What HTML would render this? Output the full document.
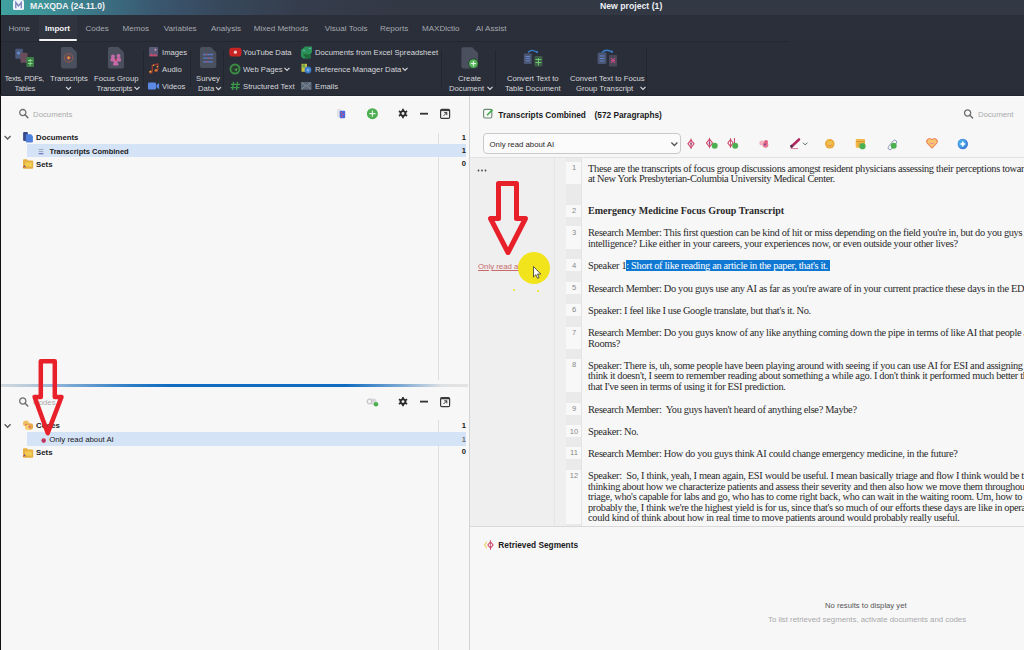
<!DOCTYPE html>
<html><head><meta charset="utf-8">
<style>
*{margin:0;padding:0;box-sizing:border-box}
html,body{width:1024px;height:650px;overflow:hidden;background:#f7f7f8;font-family:"Liberation Sans",sans-serif}
.a{position:absolute}
.t{position:absolute;white-space:pre;line-height:12px;height:12px}
#title{left:0;top:0;width:1024px;height:15px;background:linear-gradient(90deg,#40a2a0 0px,#3e9a9a 30px,#3c8590 70px,#3b6c80 110px,#3a566e 160px,#37485c 220px,#353d4c 300px,#333845 400px,#333845 1024px)}
#tabs{left:0;top:15px;width:1024px;height:26.5px;background:#2b2f3a}
#ribbon{left:0;top:41px;width:1024px;height:55px;background:#2a2e39}
.tab{color:#a6a9b0;font-size:8.05px;top:22.6px}
.rt{color:#d6d8dc;font-size:7.7px}
.lb{position:absolute;left:0;top:0;width:1px;height:96px;background:#0c0c0c}
.sep{position:absolute;width:1px;background:#22262e}
.ph{color:#ababab;font-size:7.8px}
.b{font-weight:bold}
.cnt{font-size:7.6px;font-weight:bold;color:#222;text-align:right;width:20px}
.doc{font-family:"Liberation Serif",serif;font-size:10.4px;letter-spacing:-0.33px;color:#2a2a2a;line-height:10.5px;white-space:pre;position:absolute;left:588px}
.doc.b{letter-spacing:0;font-size:10px}
.hl{background:#0f78d2;color:#fff;padding-right:2px}
.pn{position:absolute;left:566px;width:15px;background:#f8f8f9}
.pnum{position:absolute;left:566px;width:16px;text-align:center;font-size:7.6px;color:#888;line-height:10px}
</style></head><body>
<!-- title bar -->
<div id="title" class="a"></div>
<div class="a" style="left:13px;top:0px;width:11px;height:10px;border-radius:1.5px;background:#eef4fa"></div>
<svg class="a" style="left:0;top:0" width="30" height="14"><path d="M15.8,8.2V2.5L18.5,6L21.3,2.5V8.2" fill="none" stroke="#7880b8" stroke-width="1.3"/></svg>
<div class="t b" style="left:30px;top:-0.3px;font-size:8.7px;color:#eef0f3">MAXQDA (24.11.0)</div>
<div class="t b" style="left:600px;top:-0.5px;font-size:8.7px;color:#eef0f3">New project (1)</div>
<!-- tabs -->
<div id="tabs" class="a"></div>
<div class="a" style="left:39px;top:15px;width:38px;height:26px;background:#30343f"></div>
<div class="a" style="left:39px;top:38.5px;width:38px;height:2.5px;background:#f4f4f4;border-radius:1px"></div>
<div class="t tab" style="left:8.4px">Home</div>
<div class="t tab b" style="left:45px;color:#f5f5f5">Import</div>
<div class="t tab" style="left:85.5px">Codes</div>
<div class="t tab" style="left:122.6px">Memos</div>
<div class="t tab" style="left:163.7px">Variables</div>
<div class="t tab" style="left:211px">Analysis</div>
<div class="t tab" style="left:253.7px">Mixed Methods</div>
<div class="t tab" style="left:324.8px">Visual Tools</div>
<div class="t tab" style="left:380px">Reports</div>
<div class="t tab" style="left:422px">MAXDictio</div>
<div class="t tab" style="left:475.7px">AI Assist</div>
<!-- ribbon -->
<div id="ribbon" class="a"></div>
<div class="a" style="left:0;top:41px;width:790px;height:1px;background:#23272f"></div>
<div id="ribbonicons"></div>
<div class="t rt" style="left:4.5px;top:72.6px;letter-spacing:-0.35px">Texts, PDFs,</div>
<div class="t rt" style="left:14.6px;top:82.6px;letter-spacing:-0.3px">Tables</div>
<div class="t rt" style="left:50px;top:72.6px">Transcripts</div>
<div class="t rt" style="left:94px;top:72.6px">Focus Group</div>
<div class="t rt" style="left:96.6px;top:82.6px;letter-spacing:-0.2px">Transcripts</div>
<div class="t rt" style="left:162px;top:46.5px">Images</div>
<div class="t rt" style="left:162px;top:63.5px">Audio</div>
<div class="t rt" style="left:162px;top:80.5px">Videos</div>
<div class="t rt" style="left:196px;top:72.6px">Survey</div>
<div class="t rt" style="left:198px;top:82.6px">Data</div>
<div class="t rt" style="left:243px;top:46.5px">YouTube Data</div>
<div class="t rt" style="left:243px;top:63.5px">Web Pages</div>
<div class="t rt" style="left:243px;top:80.5px">Structured Text</div>
<div class="t rt" style="left:315px;top:46.5px">Documents from Excel Spreadsheet</div>
<div class="t rt" style="left:315px;top:63.5px">Reference Manager Data</div>
<div class="t rt" style="left:315px;top:80.5px">Emails</div>
<div class="t rt" style="left:458px;top:72.6px">Create</div>
<div class="t rt" style="left:449px;top:82.6px">Document</div>
<div class="t rt" style="left:507px;top:72.6px">Convert Text to</div>
<div class="t rt" style="left:505px;top:82.6px">Table Document</div>
<div class="t rt" style="left:570px;top:72.6px">Convert Text to Focus</div>
<div class="t rt" style="left:576px;top:82.6px">Group Transcript</div>
<div class="sep" style="left:143px;top:50px;height:37px"></div>
<div class="sep" style="left:190px;top:50px;height:37px"></div>
<div class="sep" style="left:223px;top:50px;height:37px"></div>
<div class="sep" style="left:441px;top:50px;height:37px"></div>
<div class="sep" style="left:495px;top:50px;height:37px"></div>
<div class="sep" style="left:646px;top:48px;height:47px"></div>

<div class="lb"></div>
<div class="a" style="left:0;top:95px;width:1024px;height:1px;background:#23272f"></div>
<div class="a" style="left:1px;top:96px;width:1023px;height:1px;background:#fdfdfd"></div>
<!-- left panel -->
<div class="a" style="left:0;top:96px;width:1px;height:554px;background:#111"></div>
<div class="a" style="left:438px;top:133px;width:1px;height:247px;background:#dedede"></div>
<div class="a" style="left:438px;top:420px;width:1px;height:230px;background:#dedede"></div>
<div class="a" style="left:469px;top:96px;width:1px;height:554px;background:#d4d4d4"></div>
<div class="t ph" style="left:33px;top:108.8px">Documents</div>
<div class="a" style="left:27px;top:144px;width:439px;height:12.5px;background:#d4e3f6"></div>
<div class="t b" style="left:36px;top:132px;font-size:7.8px;color:#1a1a1a">Documents</div>
<div class="t b" style="left:49.5px;top:145.5px;font-size:7.5px;color:#1a1a1a">Transcripts Combined</div>
<div class="t b" style="left:36px;top:158.7px;font-size:7.8px;color:#1a1a1a">Sets</div>
<div class="t cnt" style="left:446px;top:131.5px">1</div>
<div class="t cnt" style="left:446px;top:145px">1</div>
<div class="t cnt" style="left:446px;top:158px">0</div>
<!-- divider -->
<div class="a" style="left:1px;top:384px;width:467px;height:3px;background:linear-gradient(90deg,#d0d8de 0px,#b8cadb 30px,#7aa8d4 70px,#2a7cc6 130px,#0f6cc0 170px,#0f6cc0 345px,#7eaad4 400px,#dde0e3 440px,#e4e4e4 467px)"></div>
<div class="t ph" style="left:33px;top:397px">Codes</div>
<div class="a" style="left:27px;top:432px;width:439px;height:13.5px;background:#d4e3f6"></div>
<div class="t b" style="left:36px;top:420px;font-size:7.8px;color:#1a1a1a">Codes</div>
<div class="t" style="left:49.2px;top:433.5px;font-size:7.8px;color:#1a1a1a">Only read about AI</div>
<div class="t b" style="left:36px;top:446.5px;font-size:7.8px;color:#1a1a1a">Sets</div>
<div class="t cnt" style="left:446px;top:420px">1</div>
<div class="t cnt" style="left:446px;top:433.5px;color:#777">1</div>
<div class="t cnt" style="left:446px;top:446px">0</div>

<!-- right doc panel -->
<div class="t b" style="left:498.3px;top:108.6px;font-size:8.3px;color:#1a1a1a">Transcripts Combined</div>
<div class="t b" style="left:594.5px;top:108.6px;font-size:8.3px;color:#1a1a1a">(572 Paragraphs)</div>
<div class="t ph" style="left:978px;top:108.8px">Document</div>
<div class="a" style="left:483px;top:133px;width:198px;height:21px;border:1px solid #c9c9c9;border-radius:4px;background:#fbfbfb"></div>
<div class="t" style="left:489.5px;top:139px;font-size:7.8px;color:#2a2a2a">Only read about AI</div>
<div class="a" style="left:470px;top:157px;width:554px;height:1px;background:#e2e2e2"></div>
<!-- doc area -->
<div class="a" style="left:470px;top:158px;width:96px;height:368px;background:#efefef"></div>
<div class="a" style="left:566px;top:158px;width:16px;height:368px;background:#eaeaea"></div>
<div class="a" style="left:554px;top:158px;width:1px;height:368px;background:#e5e5e5"></div>
<div class="a" style="left:581px;top:158px;width:1px;height:368px;background:#e4e4e4"></div>
<div class="a" style="left:582px;top:158px;width:442px;height:368px;background:#f7f7f8"></div>
<div id="paras">
<div class="pn" style="top:161.8px;height:22.5px"></div>
<div class="pnum" style="top:163.0px">1</div>
<div class="doc" style="top:163.8px">These are the transcripts of focus group discussions amongst resident physicians assessing their perceptions towards
at New York Presbyterian-Columbia University Medical Center.</div>
<div class="pn" style="top:204.6px;height:12.0px"></div>
<div class="pnum" style="top:205.8px">2</div>
<div class="doc b" style="top:205.6px">Emergency Medicine Focus Group Transcript</div>
<div class="pn" style="top:226.3px;height:22.5px"></div>
<div class="pnum" style="top:227.5px">3</div>
<div class="doc" style="top:228.2px">Research Member: This first question can be kind of hit or miss depending on the field you're in, but do you guys believe
intelligence? Like either in your careers, your experiences now, or even outside your other lives?</div>
<div class="pn" style="top:259.3px;height:12.0px"></div>
<div class="pnum" style="top:260.5px">4</div>
<div class="doc" style="top:261.2px">Speaker 1<span class="hl">: Short of like reading an article in the paper, that's it.</span></div>
<div class="pn" style="top:281.8px;height:12.0px"></div>
<div class="pnum" style="top:283.0px">5</div>
<div class="doc" style="top:283.8px">Research Member: Do you guys use any AI as far as you're aware of in your current practice these days in the ED?</div>
<div class="pn" style="top:303.8px;height:12.0px"></div>
<div class="pnum" style="top:305.0px">6</div>
<div class="doc" style="top:305.8px">Speaker: I feel like I use Google translate, but that's it. No.</div>
<div class="pn" style="top:326.5px;height:22.5px"></div>
<div class="pnum" style="top:327.7px">7</div>
<div class="doc" style="top:328.4px">Research Member: Do you guys know of any like anything coming down the pipe in terms of like AI that people are using
Rooms?</div>
<div class="pn" style="top:359.0px;height:33.0px"></div>
<div class="pnum" style="top:360.2px">8</div>
<div class="doc" style="top:360.9px">Speaker: There is, uh, some people have been playing around with seeing if you can use AI for ESI and assigning ESI
think it doesn't, I seem to remember reading about something a while ago. I don't think it performed much better than
that I've seen in terms of using it for ESI prediction.</div>
<div class="pn" style="top:402.7px;height:12.0px"></div>
<div class="pnum" style="top:403.9px">9</div>
<div class="doc" style="top:404.6px">Research Member:  You guys haven't heard of anything else? Maybe?</div>
<div class="pn" style="top:425.3px;height:12.0px"></div>
<div class="pnum" style="top:426.5px">10</div>
<div class="doc" style="top:427.2px">Speaker: No.</div>
<div class="pn" style="top:446.9px;height:12.0px"></div>
<div class="pnum" style="top:448.1px">11</div>
<div class="doc" style="top:448.9px">Research Member: How do you guys think AI could change emergency medicine, in the future?</div>
<div class="pn" style="top:469.5px;height:54.0px"></div>
<div class="pnum" style="top:470.7px">12</div>
<div class="doc" style="top:471.4px">Speaker:  So, I think, yeah, I mean again, ESI would be useful. I mean basically triage and flow I think would be the
thinking about how we characterize patients and assess their severity and then also how we move them throughout
triage, who's capable for labs and go, who has to come right back, who can wait in the waiting room. Um, how to
probably the, I think we're the highest yield is for us, since that's so much of our efforts these days are like in operations
could kind of think about how in real time to move patients around would probably really useful.</div>
</div>

<!-- retrieved segments -->
<div class="a" style="left:470px;top:526px;width:554px;height:1px;background:#d9d9d9"></div>
<div class="a" style="left:470px;top:527px;width:554px;height:123px;background:#f7f7f8"></div>
<div class="t b" style="left:498.3px;top:539.3px;font-size:8.3px;color:#1a1a1a">Retrieved Segments</div>
<div class="t" style="left:825px;top:600px;font-size:7.7px;color:#555">No results to display yet</div>
<div class="t" style="left:768px;top:614.3px;font-size:7.8px;color:#a9a9a9">To list retrieved segments, activate documents and codes</div>
<svg class="a" style="left:0;top:0" width="1024" height="650" viewBox="0 0 1024 650">
<!-- ribbon chevrons -->
<g stroke="#d6d8dc">
<g transform="translate(68.5,88)"><path d="M-2.5,-1.2 L0,1.3 L2.5,-1.2" fill="none" stroke-width="1.2"/></g>
<g transform="translate(137,88)"><path d="M-2.5,-1.2 L0,1.3 L2.5,-1.2" fill="none" stroke-width="1.2"/></g>
<g transform="translate(218.5,88.4)"><path d="M-2.5,-1.2 L0,1.3 L2.5,-1.2" fill="none" stroke-width="1.2"/></g>
<g transform="translate(287,69)"><path d="M-2.5,-1.2 L0,1.3 L2.5,-1.2" fill="none" stroke-width="1.2"/></g>
<g transform="translate(405,69)"><path d="M-2.5,-1.2 L0,1.3 L2.5,-1.2" fill="none" stroke-width="1.2"/></g>
<g transform="translate(490,88)"><path d="M-2.5,-1.2 L0,1.3 L2.5,-1.2" fill="none" stroke-width="1.2"/></g>
<g transform="translate(643,88)"><path d="M-2.5,-1.2 L0,1.3 L2.5,-1.2" fill="none" stroke-width="1.2"/></g>
</g>
<!-- 1 texts pdfs tables -->
<rect x="15.3" y="48.7" width="7.6" height="10" rx="1" fill="#4b5a7c"/>
<rect x="20.5" y="52.8" width="7" height="10" rx="1" fill="#6a4c5b"/>
<rect x="26.4" y="57" width="7.6" height="10" rx="1" fill="#3d7d46"/>
<path d="M28,60.5h4.5M28,63.5h4.5M30.2,59v7" stroke="#8fe08f" stroke-width="0.9"/>
<circle cx="18.5" cy="53" r="1.6" fill="#6a8ad0"/>
<!-- 2 transcripts -->
<path d="M61,49a2,2 0 0 1 2,-2h8.5l5.3,5.3v14.3a2,2 0 0 1 -2,2h-11.8a2,2 0 0 1 -2,-2z" fill="#4a505d"/>
<circle cx="68.6" cy="57.8" r="4.3" fill="none" stroke="#9a5a4e" stroke-width="1"/>
<circle cx="68.6" cy="57.8" r="2.2" fill="#a8504a"/>
<circle cx="68.6" cy="57.8" r="1" fill="#f0c040"/>
<!-- 3 focus group -->
<path d="M108,49a2,2 0 0 1 2,-2h8.5l5.5,5.5v14a2,2 0 0 1 -2,2h-12a2,2 0 0 1 -2,-2z" fill="#4a505d"/>
<g fill="#c56aa8"><circle cx="113" cy="56.5" r="2"/><circle cx="118.5" cy="56" r="2"/><circle cx="115.5" cy="61.5" r="2.2"/><rect x="110.5" y="58" width="4.5" height="3.5" rx="1"/><rect x="116.5" y="58" width="4.5" height="3.5" rx="1"/><rect x="113" y="63" width="5.5" height="2.5" rx="1"/></g>
<circle cx="116" cy="60" r="0.9" fill="#d03030"/>
<!-- 4 images -->
<rect x="149" y="47" width="9" height="9.2" rx="1" fill="#5a5a76"/>
<path d="M149,56.2l2.5,-3l2,2l1.5,-1.5l3,2.5z" fill="#c84a6a"/>
<circle cx="155.5" cy="49.8" r="1" fill="#d0a0c0"/>
<!-- 5 audio -->
<path d="M152.3,71.5V65.5L157.8,64V70" fill="none" stroke="#9a3a2e" stroke-width="1.4"/>
<ellipse cx="150.7" cy="72" rx="1.9" ry="1.6" fill="#b04a30"/>
<ellipse cx="156.2" cy="70.5" rx="1.9" ry="1.6" fill="#b04a30"/>
<circle cx="150.4" cy="71.6" r="0.8" fill="#e8c040"/><circle cx="156" cy="70.1" r="0.8" fill="#e8c040"/>
<circle cx="153.5" cy="65.3" r="0.7" fill="#e8c040"/><circle cx="157.3" cy="66.8" r="0.7" fill="#e8c040"/>
<!-- 6 videos -->
<rect x="148" y="82.6" width="8" height="6.8" rx="1.2" fill="#5b89e6"/>
<path d="M156.5,85l2.6,-2v6.2l-2.6,-2z" fill="#5b89e6"/>
<!-- 7 survey -->
<path d="M200,49a2,2 0 0 1 2,-2h8.7l5.6,5.6v13.4a2,2 0 0 1 -2,2h-12.3a2,2 0 0 1 -2,-2z" fill="#4a505d"/>
<path d="M203,54.5h10M203,58.2h10M203,61.9h10" stroke="#5a78c8" stroke-width="1.3"/>
<circle cx="206.5" cy="54.5" r="0.7" fill="#d04040"/><circle cx="209" cy="58.2" r="0.7" fill="#d04040"/><circle cx="207" cy="61.9" r="0.7" fill="#d04040"/>
<!-- 8 youtube -->
<rect x="229.3" y="47.8" width="12.2" height="8.8" rx="2.8" fill="#c82424"/>
<circle cx="235.4" cy="52.2" r="1.6" fill="#f0d0d0"/>
<!-- 9 globe -->
<circle cx="235" cy="69" r="5.5" fill="#3a8c46"/>
<circle cx="235" cy="69" r="3.6" fill="#2a3a30"/>
<path d="M232.5,67.5l2.5,2l2.5,-1.5l-1,3.5z" fill="#4fb05a"/>
<!-- 10 structured text # -->
<path d="M233.5,81.8l-1,8.4M237.5,81.8l-1,8.4M231,84.3h9M230.5,87.7h9" stroke="#3a9a4a" stroke-width="1.3"/>
<!-- 11 excel -->
<path d="M301,50l4,-3.5h7v6l-3,3v3h-6l-2,-2z" fill="#2a9058"/>
<path d="M303,54l3,4.5h5v-4z" fill="#1f6a3a"/>
<circle cx="304" cy="50.5" r="0.8" fill="#8ac0e0"/><circle cx="310" cy="48.5" r="0.8" fill="#8ac0e0"/>
<!-- 12 reference manager -->
<rect x="301.5" y="63.8" width="5.5" height="8" fill="#c8c040"/>
<rect x="302.5" y="64.5" width="2.5" height="3" fill="#60a050"/>
<circle cx="308" cy="70" r="3.4" fill="#3a7ac8"/>
<circle cx="308" cy="70" r="1.5" fill="#7ab0e8"/>
<!-- 13 emails -->
<rect x="301" y="82" width="10.5" height="7.8" rx="0.8" fill="#5c6878"/>
<path d="M301.5,82.5l4.75,3.8l4.75,-3.8M301.5,89.3l3.5,-3M311,89.3l-3.5,-3" stroke="#8a98a8" stroke-width="0.8" fill="none"/>
<!-- 14 create doc -->
<path d="M461.4,49.3a2,2 0 0 1 2,-2h8.8l5.8,5.8v13.3a2,2 0 0 1 -2,2h-12.6a2,2 0 0 1 -2,-2z" fill="#4a505d"/>
<circle cx="473.4" cy="63.6" r="5" fill="#1c3a24"/>
<circle cx="473.4" cy="63.6" r="4.4" fill="#56b45c"/>
<path d="M473.4,61v5.2M470.8,63.6h5.2" stroke="#eaf8ea" stroke-width="1"/>
<!-- 15 convert to table -->
<rect x="523.8" y="53.4" width="8" height="10.6" rx="1" fill="#4a5570"/>
<path d="M525.5,56.5h4.5M525.5,58.7h4.5M525.5,60.9h4.5" stroke="#6a8ad8" stroke-width="0.9"/>
<rect x="534.4" y="56" width="8" height="10.6" rx="1" fill="#3e5a48"/>
<path d="M535.5,59.5h6M535.5,62.5h6M538.5,58v7.5" stroke="#70d070" stroke-width="0.9"/>
<path d="M528,52.5q4,-4.5 9.5,0.3" fill="none" stroke="#3a80d0" stroke-width="1.3"/>
<path d="M535.5,51.5l2.5,1.8l-0.6,-2.8z" fill="#3a80d0"/>
<!-- 16 convert to focus -->
<rect x="597.6" y="52.5" width="8.8" height="11.5" rx="1" fill="#4a5570"/>
<path d="M599.5,56h5M599.5,58.5h5M599.5,61h5" stroke="#6a8ad8" stroke-width="0.9"/>
<rect x="609" y="55" width="8" height="11.6" rx="1" fill="#4a4858"/>
<path d="M611,58l4,5M615,58l-4,5M611,60.5h4" stroke="#c04a80" stroke-width="1.2"/>
<path d="M602,52.5q4.5,-4.5 10.5,0" fill="none" stroke="#3a80d0" stroke-width="1.3"/>
<path d="M610.5,51.2l2.4,1.8l-0.4,-2.8z" fill="#3a80d0"/>
</svg>
<svg class="a" style="left:0;top:0" width="1024" height="650" viewBox="0 0 1024 650" id="panelsvg">
<!-- docs toolbar -->
<g transform="translate(22.8,112.6)"><g><circle cx="0" cy="0" r="3.1" fill="none" stroke="#6e6e6e" stroke-width="1.3"/><path d="M2.2,2.2L5,5" stroke="#6e6e6e" stroke-width="1.5" stroke-linecap="round"/></g></g>
<rect x="337" y="109" width="4.5" height="8" rx="0.8" fill="#e2e2e6"/>
<rect x="339.7" y="110.8" width="5.5" height="7.4" rx="1" fill="#5068d8"/>
<circle cx="341.5" cy="112.8" r="0.7" fill="#e05070"/><circle cx="343.2" cy="114.5" r="0.7" fill="#e05070"/><circle cx="341.6" cy="116.3" r="0.7" fill="#e05070"/>
<circle cx="372.4" cy="113.7" r="5.5" fill="#4caf50"/>
<path d="M372.4,110.6v6.2M369.3,113.7h6.2" stroke="#e8f5e8" stroke-width="1.2"/>
<g transform="translate(403,113.5)"><g><path d="M-1.70,-2.94L-0.82,-3.30L-0.92,-4.71L0.92,-4.71L0.82,-3.30L1.70,-2.94L2.45,-2.36L3.62,-3.15L4.54,-1.56L3.27,-0.94L3.40,0.00L3.27,0.94L4.54,1.56L3.62,3.15L2.45,2.36L1.70,2.94L0.82,3.30L0.92,4.71L-0.92,4.71L-0.82,3.30L-1.70,2.94L-2.45,2.36L-3.62,3.15L-4.54,1.56L-3.27,0.94L-3.40,-0.00L-3.27,-0.94L-4.54,-1.56L-3.62,-3.15L-2.45,-2.36Z" fill="#2a2a2a"/><circle r="1.4" fill="#f0f0f0"/></g></g>
<path d="M420,113.7h8" stroke="#333" stroke-width="1.8"/>
<g transform="translate(440,108.8)"><g><rect x="0.6" y="0.6" width="9" height="9" rx="1.2" fill="none" stroke="#3a3a3a" stroke-width="1.2"/><path d="M1,1.5h8.2" stroke="#3a3a3a" stroke-width="1.6"/><path d="M3.6,7L6.8,3.8M4.2,3.8h2.6v2.6" fill="none" stroke="#3a3a3a" stroke-width="1"/></g></g>
<!-- docs tree -->
<g transform="translate(7.6,137.5)" stroke="#5a5a5a"><path d="M-3,-1.5L0,1.5L3,-1.5" fill="none" stroke-width="1.3"/></g>
<rect x="23.1" y="132" width="4.8" height="9" rx="1" fill="#3a4a88"/>
<path d="M25.8,135.5a1.2,1.2 0 0 1 1.2,-1.2h4l1.9,2v5.2a1.1,1.1 0 0 1 -1.1,1.1h-4.9a1.1,1.1 0 0 1 -1.1,-1.1z" fill="#4f80dc"/>
<path d="M38.8,149.5h4.5M38.8,151.6h4.5M38.8,153.7h4.5" stroke="#8a96b0" stroke-width="0.8"/>
<path d="M38.8,153.7h4.5" stroke="#5a60d0" stroke-width="0.8"/>
<g transform="translate(23,158.8)"><g><path d="M0,1.5a1,1 0 0 1 1,-1h3l1,1.3h4.2a1,1 0 0 1 1,1v6.2a1,1 0 0 1 -1,1h-8.2a1,1 0 0 1 -1,-1z" fill="#e6b040"/><rect x="2" y="3.5" width="7" height="4.5" fill="#f0c850"/><circle cx="5" cy="5" r="0.8" fill="#f6e060"/><circle cx="7.5" cy="6.5" r="0.8" fill="#f6e060"/><path d="M0.3,8.8l1.2,-1.8l1.2,1.8" stroke="#c03050" stroke-width="0.8" fill="none"/><circle cx="1.5" cy="7.4" r="0.6" fill="#3050c0"/></g></g>
<!-- codes toolbar -->
<g transform="translate(22.8,401)"><g><circle cx="0" cy="0" r="3.1" fill="none" stroke="#6e6e6e" stroke-width="1.3"/><path d="M2.2,2.2L5,5" stroke="#6e6e6e" stroke-width="1.5" stroke-linecap="round"/></g></g>
<rect x="366.5" y="398.5" width="10" height="6" rx="3" fill="#d8d8dc"/>
<circle cx="369.5" cy="401.5" r="2.2" fill="#f4f4f4" stroke="#a8a8b0" stroke-width="0.6"/>
<circle cx="376" cy="404.2" r="2.3" fill="#4caf50"/>
<g transform="translate(403,401.6)"><g><path d="M-1.70,-2.94L-0.82,-3.30L-0.92,-4.71L0.92,-4.71L0.82,-3.30L1.70,-2.94L2.45,-2.36L3.62,-3.15L4.54,-1.56L3.27,-0.94L3.40,0.00L3.27,0.94L4.54,1.56L3.62,3.15L2.45,2.36L1.70,2.94L0.82,3.30L0.92,4.71L-0.92,4.71L-0.82,3.30L-1.70,2.94L-2.45,2.36L-3.62,3.15L-4.54,1.56L-3.27,0.94L-3.40,-0.00L-3.27,-0.94L-4.54,-1.56L-3.62,-3.15L-2.45,-2.36Z" fill="#2a2a2a"/><circle r="1.4" fill="#f0f0f0"/></g></g>
<path d="M420,401.6h8" stroke="#333" stroke-width="1.8"/>
<g transform="translate(440,397)"><g><rect x="0.6" y="0.6" width="9" height="9" rx="1.2" fill="none" stroke="#3a3a3a" stroke-width="1.2"/><path d="M1,1.5h8.2" stroke="#3a3a3a" stroke-width="1.6"/><path d="M3.6,7L6.8,3.8M4.2,3.8h2.6v2.6" fill="none" stroke="#3a3a3a" stroke-width="1"/></g></g>
<!-- codes tree -->
<g transform="translate(7.6,425.8)" stroke="#5a5a5a"><path d="M-3,-1.5L0,1.5L3,-1.5" fill="none" stroke-width="1.3"/></g>
<g>
<circle cx="26" cy="423.5" r="3" fill="#f0c060"/>
<circle cx="30" cy="426.5" r="3.2" fill="#e8a848"/>
<circle cx="27.5" cy="427.5" r="2.5" fill="#f4d070"/>
<circle cx="29.5" cy="427" r="1" fill="#e05a7a"/>
<circle cx="26" cy="424.5" r="0.8" fill="#e05a7a"/>
</g>
<circle cx="43.7" cy="440.6" r="2.3" fill="#d03858"/>
<circle cx="43.7" cy="440.6" r="0.9" fill="#8a3a80"/>
<g transform="translate(23,447.8)"><g><path d="M0,1.5a1,1 0 0 1 1,-1h3l1,1.3h4.2a1,1 0 0 1 1,1v6.2a1,1 0 0 1 -1,1h-8.2a1,1 0 0 1 -1,-1z" fill="#e6b040"/><rect x="2" y="3.5" width="7" height="4.5" fill="#f0c850"/><circle cx="5" cy="5" r="0.8" fill="#f6e060"/><circle cx="7.5" cy="6.5" r="0.8" fill="#f6e060"/><path d="M0.3,8.8l1.2,-1.8l1.2,1.8" stroke="#c03050" stroke-width="0.8" fill="none"/><circle cx="1.5" cy="7.4" r="0.6" fill="#3050c0"/></g></g>
<!-- doc header -->
<rect x="483.6" y="109.4" width="8.2" height="8.6" rx="1.4" fill="none" stroke="#6a8a70" stroke-width="1.1"/>
<path d="M487,115.2L492.6,109.6" stroke="#3faa4a" stroke-width="1.5"/>
<g transform="translate(967.6,113)"><g><circle cx="0" cy="0" r="3.1" fill="none" stroke="#6e6e6e" stroke-width="1.3"/><path d="M2.2,2.2L5,5" stroke="#6e6e6e" stroke-width="1.5" stroke-linecap="round"/></g></g>
<g transform="translate(674.4,144)" stroke="#555" stroke-width="1.1"><path d="M-3,-1.5L0,1.5L3,-1.5" fill="none" stroke-width="1.3"/></g>
<!-- doc toolbar icons -->
<g transform="translate(691,143.8)"><g><path d="M0,-5.2V5.2" stroke="#c04a70" stroke-width="0.9"/><path d="M0,-3.8L3,0L0,3.8L-3,0z" fill="none" stroke="#d04a6a" stroke-width="1.2"/><circle r="0.9" fill="#8a3a90"/></g></g>
<g transform="translate(709.5,143)"><g><path d="M0,-5.2V5.2" stroke="#c04a70" stroke-width="0.9"/><path d="M0,-3.8L3,0L0,3.8L-3,0z" fill="none" stroke="#d04a6a" stroke-width="1.2"/><circle r="0.9" fill="#8a3a90"/></g></g>
<circle cx="714.7" cy="145.7" r="3" fill="#4cb050"/>
<g transform="translate(730.5,143)"><path d="M0,-4.8V4.8" stroke="#c04a70" stroke-width="0.9"/><path d="M0,-3.5L2.6,0L0,3.5L-2.6,0z" fill="none" stroke="#d04a6a" stroke-width="1.1"/><path d="M4,-5V0" stroke="#c04a70" stroke-width="1"/></g>
<circle cx="735.2" cy="145.7" r="3" fill="#4cb050"/>
<g transform="translate(764,144)"><circle cx="-2" cy="-1" r="2.6" fill="#f0b0c0"/><circle cx="1.5" cy="1" r="2.8" fill="#e87890"/><circle cx="2" cy="-2" r="2" fill="#e06080"/><circle cx="1" cy="0.5" r="1" fill="#7a40a0"/></g>
<path d="M791.5,146.5l7.5,-7" stroke="#b02a60" stroke-width="2.6" stroke-linecap="round"/>
<path d="M791,146.8l1.3,-1.3" stroke="#40304a" stroke-width="2.6"/>
<path d="M790.5,148.6h7.5" stroke="#c86080" stroke-width="0.8"/>
<g transform="translate(805.2,143.8) scale(0.75) translate(-805.2,-143.8) translate(805.2,143.8)" stroke="#4a6a50"><path d="M-3,-1.5L0,1.5L3,-1.5" fill="none" stroke-width="1.3"/></g>
<circle cx="829.8" cy="143.8" r="4.8" fill="#eaa838"/>
<circle cx="829.8" cy="143.8" r="3" fill="#f2c050"/>
<path d="M827.8,144.8q2,2 4,0" stroke="#e07a50" stroke-width="0.8" fill="none"/>
<rect x="855.7" y="138.9" width="9.3" height="8.8" rx="1" fill="#f0b848"/>
<path d="M856,141.5h9M859,141.5v6" stroke="#d89030" stroke-width="0.8"/>
<circle cx="862.5" cy="146.2" r="3.1" fill="#4cb050"/>
<path d="M888.5,146.5l5,-6a2,2 0 0 1 2.8,2.8l-5,6a2,2 0 0 1 -2.8,-2.8z" fill="none" stroke="#8a9ab8" stroke-width="1"/>
<circle cx="893.7" cy="145.7" r="3" fill="#4cb050"/>
<path d="M932,148L927.3,143.2A2.7,2.7 0 0 1 932,139.9A2.7,2.7 0 0 1 936.7,143.2Z" fill="#f6c870" stroke="#ec8a60" stroke-width="1.1" stroke-linejoin="round"/>
<path d="M929.8,142.8q2.2,2.2 4.4,0" stroke="#f07aa0" stroke-width="0.9" fill="none"/>
<circle cx="962.8" cy="144" r="5.2" fill="#3f7ed8"/>
<circle cx="962" cy="143.2" r="4" fill="#4aa8ea"/>
<path d="M962.8,140.8q0.4,2.8 3.2,3.2q-2.8,0.4 -3.2,3.2q-0.4,-2.8 -3.2,-3.2q2.8,-0.4 3.2,-3.2z" fill="#fff"/>
<!-- retrieved segments icon -->
<g transform="translate(488.5,545)"><path d="M2,-5V5" stroke="#c04a70" stroke-width="0.8"/><path d="M2,-3.2L4.6,0L2,3.2L-0.6,0z" fill="none" stroke="#d04a6a" stroke-width="1.1"/><path d="M-1.5,-3.2L-4,0L-1.5,3.2" fill="none" stroke="#f0d060" stroke-width="1.1"/></g>
<!-- dots -->
<g fill="#444"><circle cx="478.5" cy="170.5" r="0.9"/><circle cx="482" cy="170.5" r="0.9"/><circle cx="485.5" cy="170.5" r="0.9"/></g>
</svg>
<div class="t" style="left:478px;top:261px;font-size:7.8px;color:#c86a6a;text-decoration:underline">Only read about AI</div>
<svg class="a" style="left:0;top:0" width="1024" height="650" viewBox="0 0 1024 650" id="overlay">
<path d="M40.8,361.3H54.8V396.9H61.5L47.7,433.1L34.6,396.9H40.8Z" fill="none" stroke="#e8202a" stroke-width="4.5" stroke-linejoin="round"/>
<path d="M498.5,183.5H516.5V218.5H525.5L508,252.5L490.5,218.5H498.5Z" fill="none" stroke="#e8202a" stroke-width="5" stroke-linejoin="round"/>
<circle cx="534" cy="268" r="16" fill="#f2e41c"/>
<path d="M533.5,266.5v10.5l2.4,-2.3l1.6,3.6l1.6,-0.7l-1.6,-3.5h3.3z" fill="#fafafa" stroke="#333" stroke-width="0.8" stroke-linejoin="round"/>
<circle cx="514" cy="290" r="1" fill="#f2e41c"/><circle cx="538" cy="291" r="1" fill="#f2e41c"/>
</svg>
</body></html>
